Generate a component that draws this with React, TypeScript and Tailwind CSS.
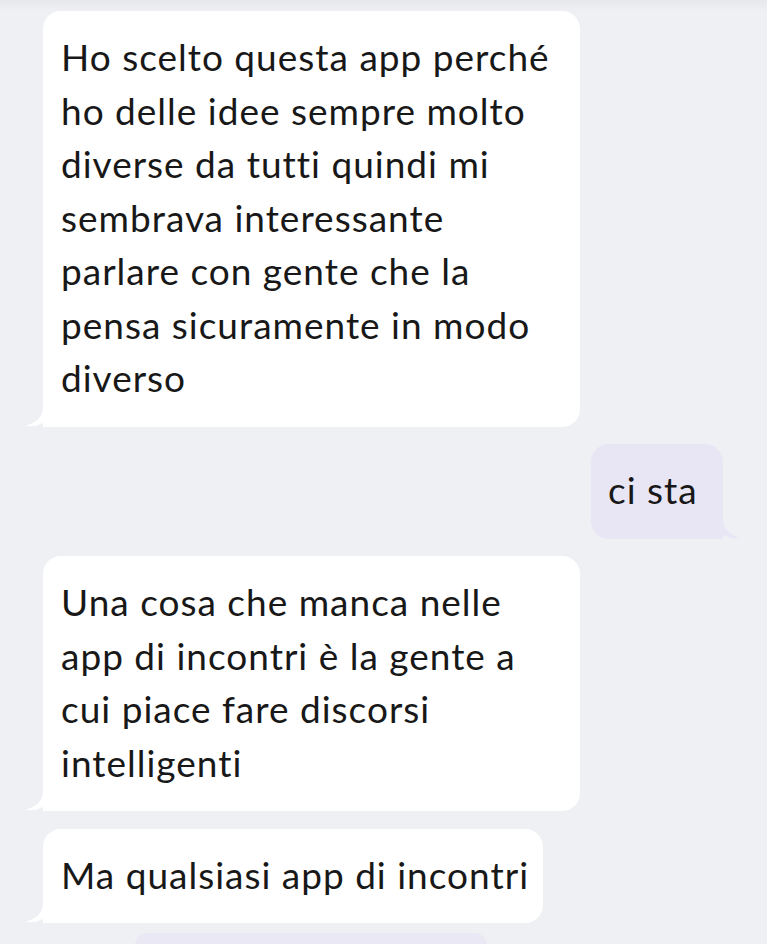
import React from "react";

type Msg = { id: number; mine?: boolean; width?: string; lines: string[] };

const messages: Msg[] = [
  {
    id: 1,
    width: "w-[537px]",
    lines: [
      "Ho scelto questa app perché",
      "ho delle idee sempre molto",
      "diverse da tutti quindi mi",
      "sembrava interessante",
      "parlare con gente che la",
      "pensa sicuramente in modo",
      "diverso",
    ],
  },
  { id: 2, mine: true, lines: ["ci sta"] },
  {
    id: 3,
    width: "w-[537px]",
    lines: [
      "Una cosa che manca nelle",
      "app di incontri è la gente a",
      "cui piace fare discorsi",
      "intelligenti",
    ],
  },
  { id: 4, width: "w-[500px]", lines: ["Ma qualsiasi app di incontri"] },
];

const TailLeft = () => (
  <svg
    className="absolute -left-[17px] bottom-0"
    width="40"
    height="30"
    viewBox="0 0 40 30"
  >
    <path d="M17 0 L17 10 C17 20 10 26 0 28.5 C6 30 12 29 16 26 C18 28.5 21 30 26 30 L40 30 L40 0 Z" fill="#ffffff" />
  </svg>
);

const TailRight = () => (
  <svg
    className="absolute -right-[17px] bottom-0"
    width="40"
    height="30"
    viewBox="0 0 40 30"
  >
    <path d="M23 0 L23 10 C23 20 30 26 40 28.5 C34 30 28 29 24 26 C22 28.5 19 30 14 30 L0 30 L0 0 Z" fill="#e8e6f5" />
  </svg>
);

function Bubble({ msg }: { msg: Msg }) {
  if (msg.mine) {
    return (
      <div className="flex justify-end pr-[44px]">
        <div className="relative w-[132px] rounded-[18px] rounded-br-none bg-[#e8e6f5] pt-[19px] pb-[22px] pl-[17px]">
          {msg.lines.map((l) => (
            <div key={l} className="whitespace-nowrap">
              {l}
            </div>
          ))}
          <TailRight />
        </div>
      </div>
    );
  }
  return (
    <div className="flex pl-[43px]">
      <div
        className={`relative rounded-[18px] rounded-bl-none bg-white pt-[19px] pb-[22px] pl-[18px] ${msg.width}`}
      >
        {msg.lines.map((l, i) => (
          <div key={i} className="whitespace-nowrap">
            {l}
          </div>
        ))}
        <TailLeft />
      </div>
    </div>
  );
}

export default function App() {
  return (
    <div
      className="h-[944px] w-[767px] overflow-hidden bg-[#eff0f4] text-[37px] leading-[53.5px] tracking-[1px] text-[#181818] [font-variant-ligatures:none]"
      style={{ fontFamily: '"Lato", "Noto Sans", sans-serif' }}
    >
      <div className="h-[11px] bg-gradient-to-b from-[#e7e8ec] to-[#eff0f4]" />
      <div className="flex flex-col gap-[17.5px]">
        {messages.map((m) => (
          <Bubble key={m.id} msg={m} />
        ))}
      </div>
      <div className="mt-[10px] ml-[135px] h-[12px] w-[352px] rounded-t-[14px] bg-[#e9e8f4]" />
    </div>
  );
}
